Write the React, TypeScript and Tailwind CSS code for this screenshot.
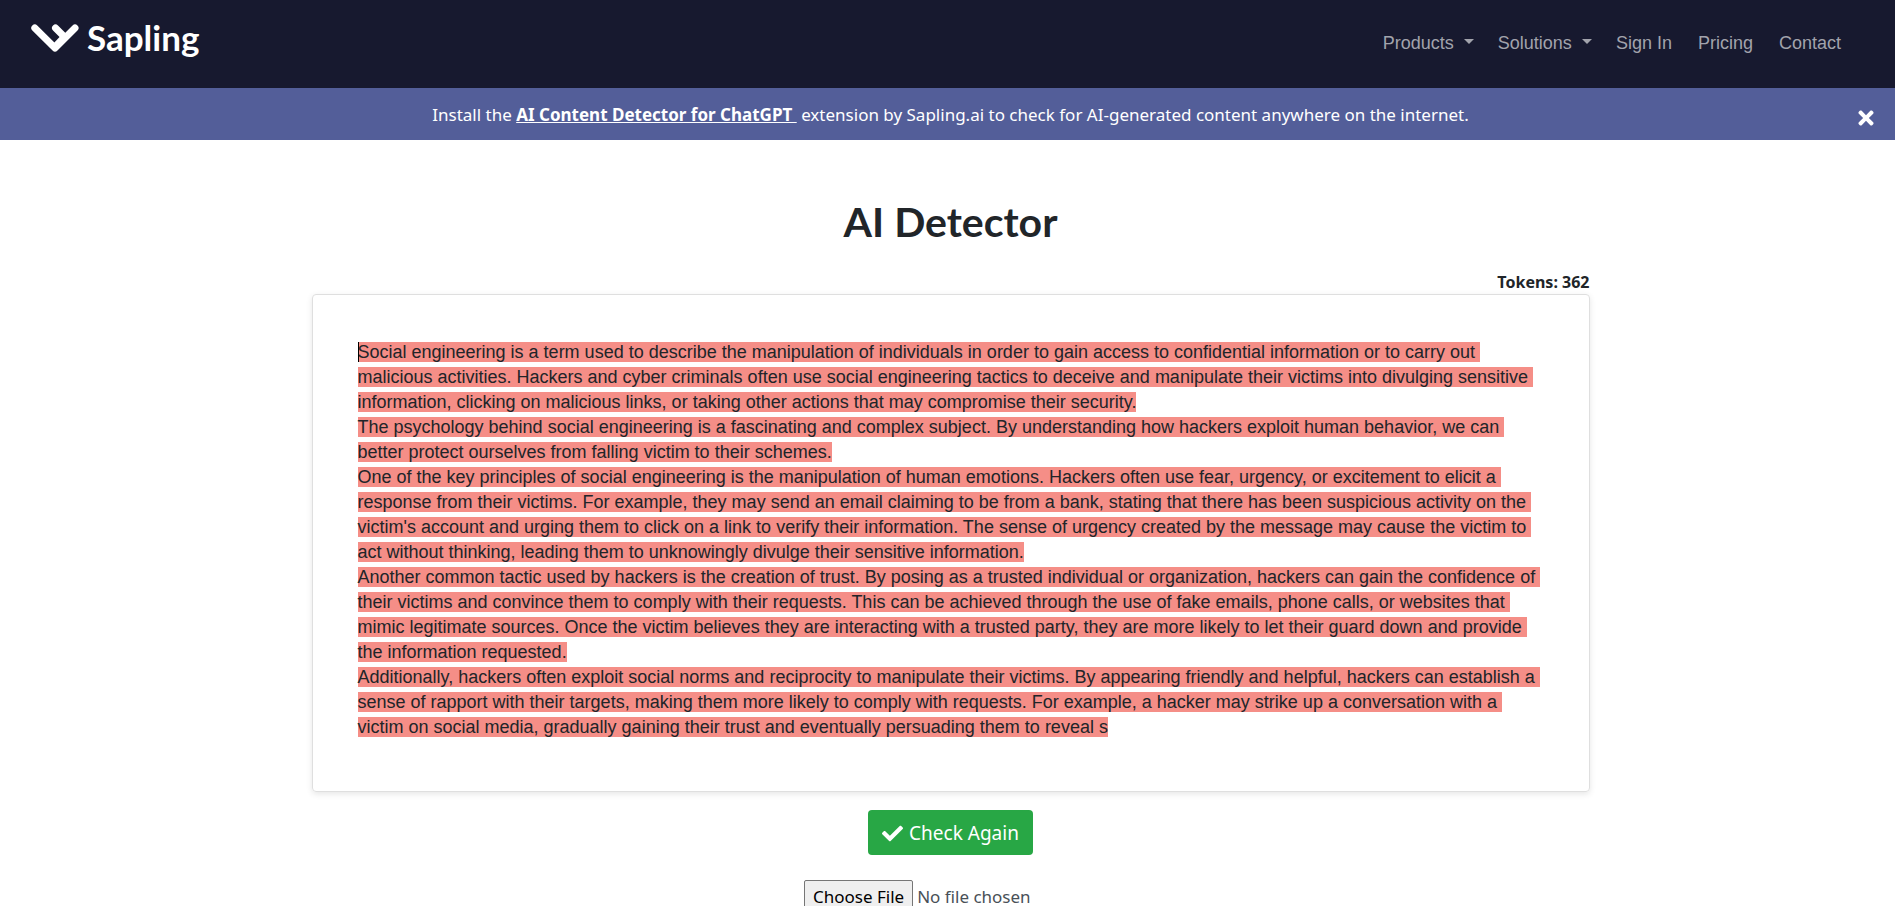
import { useState } from "react";
import { FaCheck, FaTimes } from "react-icons/fa";

const navItems = [
    { label: "Products", menu: true },
    { label: "Solutions", menu: true },
    { label: "Sign In", menu: false },
    { label: "Pricing", menu: false },
    { label: "Contact", menu: false },
];

const paragraphs = [
    "Social engineering is a term used to describe the manipulation of individuals in order to gain access to confidential information or to carry out malicious activities. Hackers and cyber criminals often use social engineering tactics to deceive and manipulate their victims into divulging sensitive information, clicking on malicious links, or taking other actions that may compromise their security.",
    "The psychology behind social engineering is a fascinating and complex subject. By understanding how hackers exploit human behavior, we can better protect ourselves from falling victim to their schemes.",
    "One of the key principles of social engineering is the manipulation of human emotions. Hackers often use fear, urgency, or excitement to elicit a response from their victims. For example, they may send an email claiming to be from a bank, stating that there has been suspicious activity on the victim's account and urging them to click on a link to verify their information. The sense of urgency created by the message may cause the victim to act without thinking, leading them to unknowingly divulge their sensitive information.",
    "Another common tactic used by hackers is the creation of trust. By posing as a trusted individual or organization, hackers can gain the confidence of their victims and convince them to comply with their requests. This can be achieved through the use of fake emails, phone calls, or websites that mimic legitimate sources. Once the victim believes they are interacting with a trusted party, they are more likely to let their guard down and provide the information requested.",
    "Additionally, hackers often exploit social norms and reciprocity to manipulate their victims. By appearing friendly and helpful, hackers can establish a sense of rapport with their targets, making them more likely to comply with requests. For example, a hacker may strike up a conversation with a victim on social media, gradually gaining their trust and eventually persuading them to reveal s",
];

function Logo() {
    return (
        <a href="#" className="flex items-start gap-2 text-white">
            <svg width="48" height="30" viewBox="0 0 48 30" fill="none" stroke="currentColor" strokeWidth="7" strokeLinecap="round" strokeLinejoin="round" className="mt-1">
                <path d="M3.800 4 L24 24 L44 4" />
                <path d="M24.500 4 L33 12.500" />
                <path d="M24 23 L33 13.500" />
            </svg>
            <span className="font-['Lato',sans-serif] text-[35px] leading-[34px] font-bold">Sapling</span>
        </a>
    );
}

function Navbar() {
    return (
        <header className="flex h-22 items-start justify-between bg-[#17192f] pt-5 pr-[54px] pl-[31px]">
            <Logo />
            <nav className="flex gap-[26px] pt-[9px] font-['Liberation_Sans',sans-serif] text-[18px] leading-7 text-[#a2a3ac]">
                {navItems.map((item) => (
                    <a key={item.label} href="#" className="flex items-center">
                        {item.label}
                        {item.menu && (
                            <svg width="10" height="5" viewBox="0 0 10 5" fill="currentColor" className="-mr-0.5 mb-1 ml-2.5">
                                <path d="M0 0h10L5 5z" />
                            </svg>
                        )}
                    </a>
                ))}
            </nav>
        </header>
    );
}

function Banner({ onClose }: { onClose: () => void }) {
    return (
        <div className="relative flex h-13 items-center justify-center bg-[#535e99] pt-0.5 pl-1.5 text-[17px] text-white">
            <p>
                Install the{" "}
                <a href="#" className="font-bold whitespace-pre underline">{"AI Content Detector for ChatGPT "}</a>
                {" "}extension by Sapling.ai to check for AI-generated content anywhere on the internet.
            </p>
            <button type="button" aria-label="Close" onClick={onClose} className="absolute top-[19px] right-[18px]">
                <FaTimes size={22} />
            </button>
        </div>
    );
}

export default function App() {
    const [showBanner, setShowBanner] = useState(true);

    return (
        <div className="min-h-screen bg-white font-['Noto_Sans',sans-serif] text-[#212529]">
            <Navbar />
            {showBanner && <Banner onClose={() => setShowBanner(false)} />}
            <main className="flex flex-col items-center pt-[55px] pl-1.5">
                <h1 className="font-['Lato',sans-serif] text-[41px] leading-[53px] font-bold">AI Detector</h1>
                <div className="w-full max-w-[1278px]">
                    <div className="mt-[22px] text-right text-base leading-6 font-bold">Tokens: 362</div>
                    <div
                        contentEditable
                        suppressContentEditableWarning
                        spellCheck={false}
                        role="textbox"
                        aria-label="Text to check"
                        className="rounded border border-[#dfdfdf] px-[45px] pt-[45px] pb-[51px] font-['Liberation_Sans',sans-serif] text-[18px] leading-[25px] shadow-[0_2px_6px_rgba(0,0,0,0.1)]"
                    >
                        {paragraphs.map((text, i) => (
                            <p key={i} className={i === 0 ? "relative whitespace-break-spaces" : "whitespace-break-spaces"}>
                                {i === 0 && <span className="absolute top-0.5 left-0 h-5 w-px bg-black" />}
                                <span className="bg-[#f58e87]">{text}</span>
                            </p>
                        ))}
                    </div>
                </div>
                <button type="button" className="mt-[18px] flex h-[45px] items-center gap-1.5 rounded bg-[#28a745] px-3.5 pt-0.5 text-[19px] text-white">
                    <FaCheck size={21} />
                    Check Again
                </button>
                <input
                    type="file"
                    aria-label="Choose a file to check"
                    className="mt-[25px] w-[293px] text-[17px] leading-[25px] text-[#495057] file:mr-1 file:rounded-xs file:border file:border-solid file:border-[#767676] file:bg-[#efefef] file:px-2 file:py-[3px] file:text-black"
                />
            </main>
        </div>
    );
}
